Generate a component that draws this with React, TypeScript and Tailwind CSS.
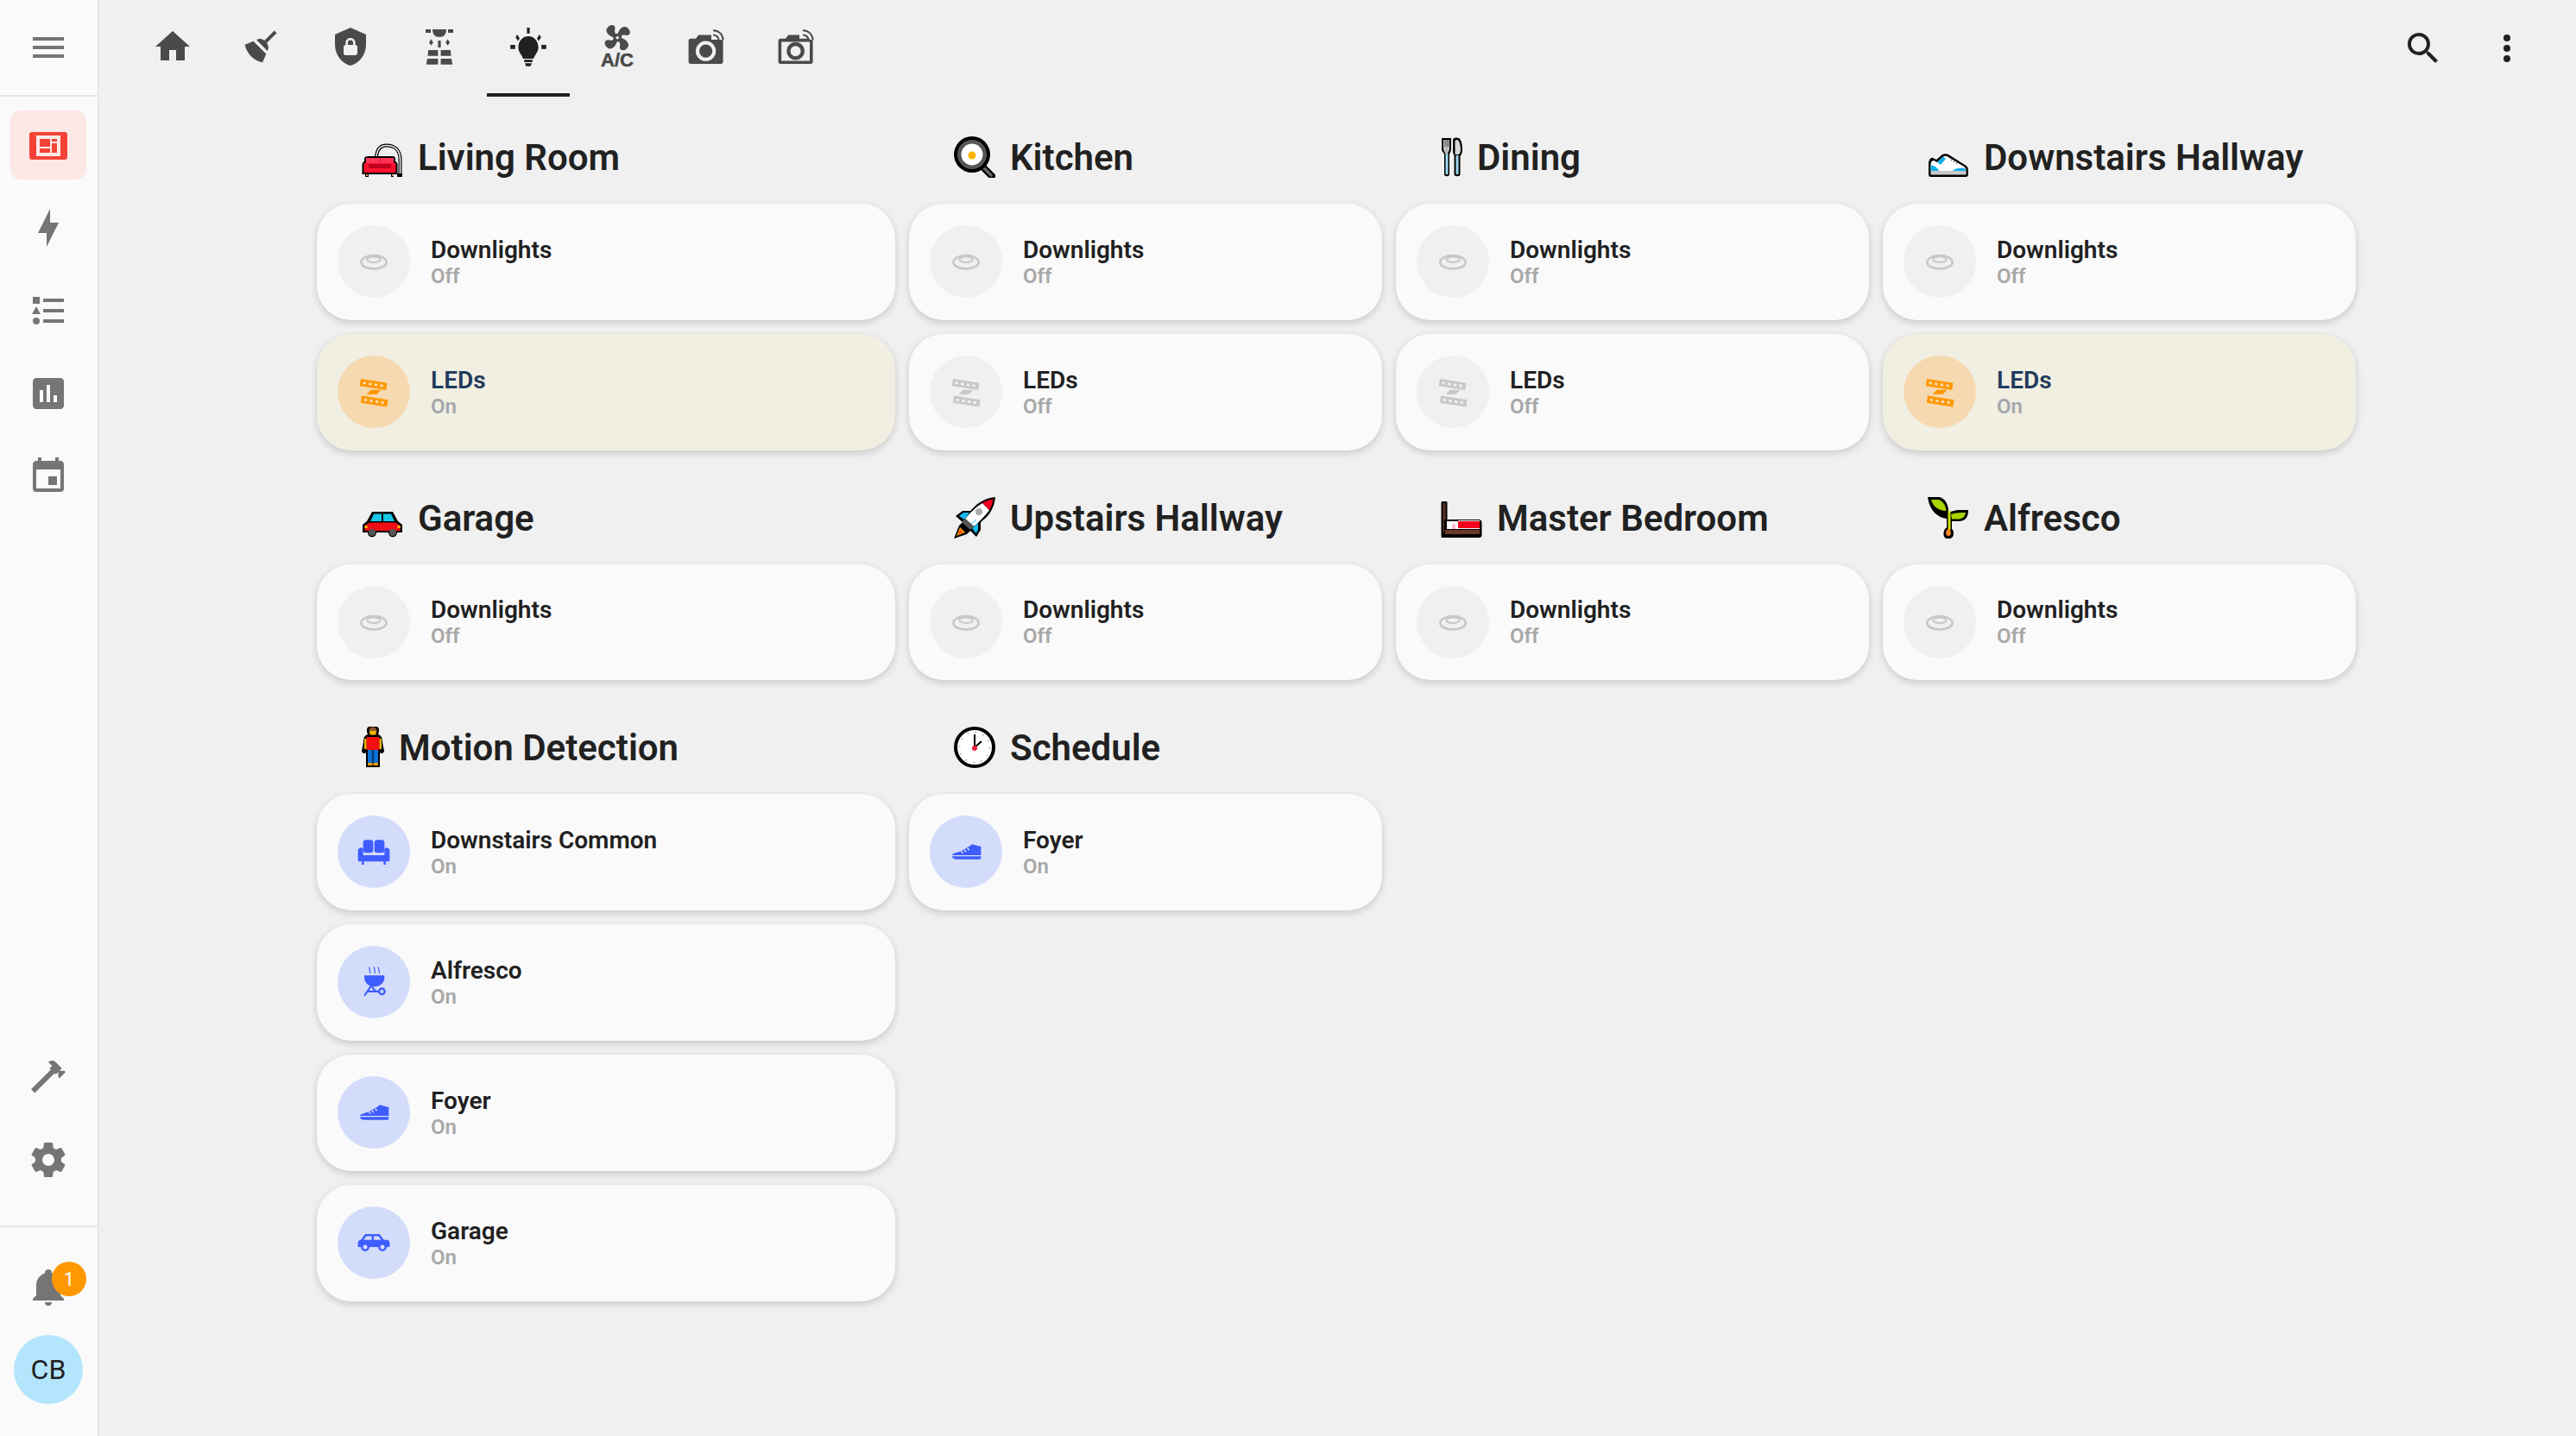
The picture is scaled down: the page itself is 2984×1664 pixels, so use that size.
import type { ReactNode } from "react";

const P = {
  menu: "M3,6H21V8H3V6M3,11H21V13H3V11M3,16H21V18H3V16Z",
  home: "M10,20V14H14V20H19V12H22L12,3L2,12H5V20H10Z",
  broom:
    "M19.36,2.72L20.78,4.14L15.06,9.85C16.13,11.39 16.28,13.24 15.38,14.44L9.06,8.12C10.26,7.22 12.11,7.37 13.65,8.44L19.36,2.72M5.93,17.57C3.92,15.56 2.69,13.16 2.35,10.92L7.23,8.83L14.67,16.27L12.58,21.15C10.34,20.81 7.94,19.58 5.93,17.57Z",
  shield:
    "M12,1L3,5V11C3,16.55 6.84,21.74 12,23C17.16,21.74 21,16.55 21,11V5L12,1M12,7C13.4,7 14.8,8.1 14.8,9.5V11C15.4,11 16,11.6 16,12.3V15.8C16,16.4 15.4,17 14.7,17H9.2C8.6,17 8,16.4 8,15.7V12.2C8,11.6 8.6,11 9.2,11V9.5C9.2,8.1 10.6,7 12,7M12,8.2C11.2,8.2 10.5,8.7 10.5,9.5V11H13.5V9.5C13.5,8.7 12.8,8.2 12,8.2Z",
  fan: "M12,11A1,1 0 0,0 11,12A1,1 0 0,0 12,13A1,1 0 0,0 13,12A1,1 0 0,0 12,11M12.5,2C17,2 17.11,5.57 14.75,6.75C13.76,7.24 13.32,8.29 13.13,9.22C13.61,9.42 14.03,9.73 14.35,10.13C18.05,8.13 22.03,8.92 22.03,12.5C22.03,17 18.46,17.1 17.28,14.73C16.78,13.74 15.72,13.3 14.79,13.11C14.59,13.59 14.28,14 13.88,14.34C15.87,18.03 15.08,22 11.5,22C7,22 6.91,18.42 9.27,17.24C10.25,16.75 10.69,15.71 10.89,14.79C10.4,14.59 9.97,14.27 9.65,13.87C5.96,15.85 2,15.07 2,11.5C2,7 5.56,6.89 6.74,9.26C7.24,10.25 8.29,10.68 9.22,10.87C9.41,10.39 9.73,9.97 10.14,9.65C8.15,5.96 8.94,2 12.5,2Z",
  bolt: "M11 15H6L13 1V9H18L11 23V15Z",
  list: "M5,9.5L7.5,14H2.5L5,9.5M3,4H7V8H3V4M5,20A2,2 0 0,0 7,18A2,2 0 0,0 5,16A2,2 0 0,0 3,18A2,2 0 0,0 5,20M9,5V7H21V5H9M9,19H21V17H9V19M9,13H21V11H9V13Z",
  chart:
    "M19 3H5C3.9 3 3 3.9 3 5V19C3 20.1 3.9 21 5 21H19C20.1 21 21 20.1 21 19V5C21 3.9 20.1 3 19 3M9 17H7V10H9V17M13 17H11V7H13V17M17 17H15V13H17V17Z",
  calendar:
    "M19,19H5V8H19M16,1V3H8V1H6V3H5C3.89,3 3,3.89 3,5V19A2,2 0 0,0 5,21H19A2,2 0 0,0 21,19V5C21,3.89 20.1,3 19,3H18V1M17,12H12V17H17V12Z",
  hammer:
    "M2 19.63L13.43 8.2L12.72 7.5L14.14 6.07L12 3.89C13.2 2.7 15.09 2.7 16.27 3.89L19.87 7.5L18.45 8.91H21.29L22 9.62L18.45 13.21L17.74 12.5V9.62L16.27 11.04L15.56 10.33L4.13 21.76L2 19.63Z",
  cog: "M12,15.5A3.5,3.5 0 0,1 8.5,12A3.5,3.5 0 0,1 12,8.5A3.5,3.5 0 0,1 15.5,12A3.5,3.5 0 0,1 12,15.5M19.43,12.97C19.47,12.65 19.5,12.33 19.5,12C19.5,11.67 19.47,11.34 19.43,11L21.54,9.37C21.73,9.22 21.78,8.95 21.66,8.73L19.66,5.27C19.54,5.05 19.27,4.96 19.05,5.05L16.56,6.05C16.04,5.66 15.5,5.32 14.87,5.07L14.5,2.42C14.46,2.18 14.25,2 14,2H10C9.75,2 9.54,2.18 9.5,2.42L9.13,5.07C8.5,5.32 7.96,5.66 7.44,6.05L4.95,5.05C4.73,4.96 4.46,5.05 4.34,5.27L2.34,8.73C2.21,8.95 2.27,9.22 2.46,9.37L4.57,11C4.53,11.34 4.5,11.67 4.5,12C4.5,12.33 4.53,12.65 4.57,12.97L2.46,14.63C2.27,14.78 2.21,15.05 2.34,15.27L4.34,18.73C4.46,18.95 4.73,19.03 4.95,18.95L7.44,17.94C7.96,18.34 8.5,18.68 9.13,18.93L9.5,21.58C9.54,21.82 9.75,22 10,22H14C14.25,22 14.46,21.82 14.5,21.58L14.87,18.93C15.5,18.67 16.04,18.34 16.56,17.94L19.05,18.95C19.27,19.03 19.54,18.95 19.66,18.73L21.66,15.27C21.78,15.05 21.73,14.78 21.54,14.63L19.43,12.97Z",
  bell: "M21,19V20H3V19L5,17V11C5,7.9 7.03,5.17 10,4.29C10,4.19 10,4.1 10,4A2,2 0 0,1 12,2A2,2 0 0,1 14,4C14,4.1 14,4.19 14,4.29C16.97,5.17 19,7.9 19,11V17L21,19M14,21A2,2 0 0,1 12,23A2,2 0 0,1 10,21",
  magnify:
    "M9.5,3A6.5,6.5 0 0,1 16,9.5C16,11.11 15.41,12.59 14.44,13.73L14.71,14H15.5L20.5,19L19,20.5L14,15.5V14.71L13.73,14.44C12.59,15.41 11.11,16 9.5,16A6.5,6.5 0 0,1 3,9.5A6.5,6.5 0 0,1 9.5,3M9.5,5C7,5 5,7 5,9.5C5,12 7,14 9.5,14C12,14 14,12 14,9.5C14,7 12,5 9.5,5Z",
  dots: "M12,16A2,2 0 0,1 14,18A2,2 0 0,1 12,20A2,2 0 0,1 10,18A2,2 0 0,1 12,16M12,10A2,2 0 0,1 14,12A2,2 0 0,1 12,14A2,2 0 0,1 10,12A2,2 0 0,1 12,10M12,4A2,2 0 0,1 14,6A2,2 0 0,1 12,8A2,2 0 0,1 10,6A2,2 0 0,1 12,4Z",
  carSide:
    "M16,6L19,10H21C22.11,10 23,10.89 23,12V15H21A3,3 0 0,1 18,18A3,3 0 0,1 15,15H9A3,3 0 0,1 6,18A3,3 0 0,1 3,15H1V12C1,10.89 1.89,10 3,10L6,6H16M10.5,7.5H6.75L4.86,10H10.5V7.5M12,7.5V10H17.14L15.25,7.5H12M6,13.5A1.5,1.5 0 0,0 4.5,15A1.5,1.5 0 0,0 6,16.5A1.5,1.5 0 0,0 7.5,15A1.5,1.5 0 0,0 6,13.5M18,13.5A1.5,1.5 0 0,0 16.5,15A1.5,1.5 0 0,0 18,16.5A1.5,1.5 0 0,0 19.5,15A1.5,1.5 0 0,0 18,13.5Z",
};

function Svg({ size = 48, children, className }: { size?: number; children: ReactNode; className?: string }) {
  return (
    <svg viewBox="0 0 24 24" width={size} height={size} fill="currentColor" className={className}>
      {children}
    </svg>
  );
}

function Mdi({ d, size = 48 }: { d: string; size?: number }) {
  return (
    <Svg size={size}>
      <path d={d} />
    </Svg>
  );
}

function FloodIcon() {
  return (
    <Svg>
      <path d="M8 2H16C16 5 14.5 6.5 12 6.5C9.5 6.5 8 5 8 2Z" />
      <rect x="4" y="2" width="3" height="2" />
      <rect x="17" y="2" width="3" height="2" />
      <path d="M7.2 7.6L8.4 9.6L7.2 11.4L6 9.6ZM16.8 7.6L18 9.6L16.8 11.4L15.6 9.6Z" />
      <rect x="11.2" y="8.5" width="1.6" height="4" />
      <path d="M5.6 14H11.2V17.4H5.2ZM12.8 14H18.4L18.8 17.4H12.8ZM5 19H11.2V22.4H4.4ZM12.8 19H19L19.6 22.4H12.8Z" />
    </Svg>
  );
}

function BulbIcon() {
  return (
    <Svg>
      <path d="M12 6C15.5 6 17.8 9 17.8 12.5C17.8 15 16 16.5 15 19H9C8 16.5 6.2 15 6.2 12.5C6.2 9 8.5 6 12 6Z" />
      <rect x="9.6" y="19.6" width="4.8" height="1.4" />
      <path d="M10 21.6H14L13.3 23.4H10.7Z" />
      <rect x="11.2" y="1" width="1.6" height="3.4" />
      <rect x="1.6" y="11" width="2.8" height="2.4" />
      <rect x="19.6" y="11" width="2.8" height="2.4" />
      <path d="M5.6 5L7 7.2L6 8.8L4.6 6.6ZM18.4 5L19.4 6.6L18 8.8L17 7.2Z" />
    </Svg>
  );
}

function AcIcon() {
  return (
    <svg viewBox="0 0 48 54" width={48} height={54} fill="currentColor">
      <g transform="translate(4.5 -3) scale(1.64) rotate(45 12 12)">
        <path d={P.fan} />
      </g>
      <text
        x="5"
        y="50"
        fontSize="22"
        fontWeight="700"
        fontFamily="'Liberation Sans', sans-serif"
        stroke="currentColor"
        strokeWidth="0.5"
        textLength="38"
        lengthAdjust="spacingAndGlyphs"
      >
        A/C
      </text>
    </svg>
  );
}

function CameraIcon({ outline }: { outline?: boolean }) {
  return (
    <Svg>
      <g transform={outline ? "translate(0.5 0)" : undefined}>
        {outline ? (
          <>
            <path
              fillRule="evenodd"
              d="M1.8 8.6C1.8 7.9 2.3 7.4 3 7.4H6L7.6 5.2H14V7.4H20V8H21.8V20.8C21.8 21.5 21.3 22 20.6 22H3C2.3 22 1.8 21.5 1.8 20.8ZM3.6 9.2V20.2H20V9.2H3.6Z"
            />
            <path fillRule="evenodd" d="M11.8 9.4A5.2 5.2 0 1 1 11.8 19.8A5.2 5.2 0 1 1 11.8 9.4ZM11.8 11.6A3 3 0 1 0 11.8 17.6A3 3 0 1 0 11.8 11.6Z" />
          </>
        ) : (
          <path
            fillRule="evenodd"
            d="M1.8 8.6C1.8 7.9 2.3 7.4 3 7.4H6L7.6 5.2H15V8H21.8V20.8C21.8 21.5 21.3 22 20.6 22H3C2.3 22 1.8 21.5 1.8 20.8ZM11.8 8.8A5.8 5.8 0 1 0 11.8 20.4A5.8 5.8 0 1 0 11.8 8.8ZM11.8 10.8A3.8 3.8 0 1 1 11.8 18.4A3.8 3.8 0 1 1 11.8 10.8Z"
          />
        )}
        <path d="M16 2.6C19.4 2.6 21.6 5 21.8 8M16 5.2C17.8 5.2 19 6.4 19.3 8" fill="none" stroke="currentColor" strokeWidth="1" />
      </g>
    </Svg>
  );
}

function RecessedIcon() {
  return (
    <Svg size={40}>
      <g fill="none" stroke="currentColor">
        <ellipse cx="12" cy="12.5" rx="8.8" ry="4.6" strokeWidth="1.6" />
        <ellipse cx="12" cy="10.6" rx="4.6" ry="2" strokeWidth="1.3" />
      </g>
    </Svg>
  );
}

function StripIcon() {
  const strip =
    "M0 0H18.5V5H0ZM2 1.6V3.4H4V1.6ZM6 1.6V3.4H8V1.6ZM10 1.6V3.4H12V1.6ZM14 1.6V3.4H16V1.6Z";
  return (
    <Svg size={40}>
      <path transform="rotate(9 3 3) translate(3 3)" fillRule="evenodd" d={strip} />
      <path transform="rotate(9 3 15) translate(3.6 14.6)" fillRule="evenodd" d={strip} />
      <path d="M10 10.6H17.2L14 13.8H7Z" />
    </Svg>
  );
}

function SofaIcon() {
  return (
    <Svg size={40}>
      <rect x="4.6" y="3.8" width="7" height="9" rx="2" />
      <rect x="12.4" y="3.8" width="7" height="9" rx="2" />
      <path d="M1 11A2 2 0 0 1 4.6 10V14.4H19.4V10A2 2 0 0 1 23 11V17.8A1 1 0 0 1 22 18.8H2A1 1 0 0 1 1 17.8Z" />
      <rect x="3.6" y="18.8" width="1.6" height="2.2" />
      <rect x="18.8" y="18.8" width="1.6" height="2.2" />
    </Svg>
  );
}

function GrillIcon() {
  return (
    <Svg size={40}>
      <path d="M5.4 7.4H19.4V9C19.4 12.4 16.4 15.2 12.4 15.2C8.4 15.2 5.4 12.4 5.4 9Z" />
      <g fill="none" stroke="currentColor" strokeWidth="0.7">
        <path d="M8.6 1.6C9.6 3.2 8.8 4 9.6 5.8M12 1.6C13 3.2 12.2 4 13 5.8M15 1.6C16 3.2 15.2 4 16 5.8" />
      </g>
      <g fill="none" stroke="currentColor" strokeWidth="1.3" strokeLinecap="round">
        <path d="M9.8 15L5.8 21M10.6 15L13 18.2M7.6 18.5H15" />
      </g>
      <circle cx="17.6" cy="18.5" r="2" fill="none" stroke="currentColor" strokeWidth="1.4" />
    </Svg>
  );
}

function SneakerIcon() {
  return (
    <Svg size={40}>
      <path d="M2.4 14.4C2.4 13 6 12.6 9 11.4L14.8 8L16 6.8L22.4 8.4V14.4Z" />
      <path d="M2.4 15.2H22.4V16.4C22.4 16.9 22 17.2 21.6 17.2H5C3.2 17.2 2.4 16.2 2.4 15.2Z" />
      <path d="M8.6 11.8L9.8 13M10.8 10.8L12 12M13 9.6L14.2 10.8" stroke="#fafafa" strokeWidth="0.7" fill="none" />
    </Svg>
  );
}

function Emoji({ width = 48, children }: { width?: number; children: ReactNode }) {
  return (
    <svg viewBox={`0 0 ${width} 48`} width={width} height={48} className="shrink-0">
      {children}
    </svg>
  );
}

const EMOJI: Record<string, ReactNode> = {
  sofa: (
    <Emoji>
      <path d="M17 26C17 15 22 10.5 29 10.5C38 10.5 44.5 16 44.5 27V46" fill="none" stroke="#000" strokeWidth="4" />
      <path d="M17 26C17 15 22 10.5 29 10.5C38 10.5 44.5 16 44.5 27V44" fill="none" stroke="#e8e8e8" strokeWidth="1.6" />
      <path d="M7 23H36C38 23 39 24 39 26V29C41 30 41.5 31 41.5 33V44H37V47H34V44H8V47H4V44H0.5V33C0.5 31 1 30 3 29V26C3 24 5 23 7 23Z" fill="#000" />
      <rect x="5" y="25" width="32" height="10" fill="#ff3358" />
      <rect x="20.5" y="25" width="1" height="8" fill="#d8143a" />
      <rect x="2.5" y="31" width="37" height="11" fill="#ff0f2e" />
      <rect x="8" y="32" width="26" height="5" fill="#bd0020" />
      <rect x="41" y="43" width="6" height="4" fill="#000" />
      <rect x="5" y="44" width="2" height="2" fill="#d9a066" />
      <rect x="35" y="44" width="2" height="2" fill="#d9a066" />
    </Emoji>
  ),
  pan: (
    <Emoji>
      <path d="M31 33L44 46" stroke="#000" strokeWidth="8" strokeLinecap="round" />
      <path d="M32 34L43 45" stroke="#666" strokeWidth="3.5" strokeLinecap="round" />
      <circle cx="21" cy="21" r="21" fill="#000" />
      <circle cx="21" cy="21" r="17" fill="#555" />
      <circle cx="21" cy="21" r="12.5" fill="#fff" />
      <circle cx="21" cy="22" r="4.5" fill="#ffb300" />
    </Emoji>
  ),
  cutlery: (
    <Emoji width={25}>
      <path d="M1 2H12V15C12 18 10 19 10 21V44C10 47 4 47 4 44V21C4 19 1 18 1 15Z" fill="#000" />
      <path d="M3 4H10V15C10 17 8 18 8 20H5C5 18 3 17 3 15Z" fill="#bdbdbd" />
      <path d="M5 4V12M7 4V12M8.7 4V12" stroke="#444" strokeWidth="0.8" />
      <rect x="5.5" y="20" width="3" height="24" fill="#9fd8ef" />
      <path d="M14 4C14 1 19 1 21 2C24 4 25 10 25 16C25 20 23 22 22.5 23V44C22.5 47 15.5 47 15.5 44V22C14.5 21 14 19 14 17Z" fill="#000" />
      <path d="M16.5 5C18 3.5 19.5 3.5 20.5 5C22.5 8 23 13 23 16C23 19 21 21 20.5 21H16.5Z" fill="#d5d5d5" />
      <rect x="17.5" y="22" width="3" height="22" fill="#9fd8ef" />
    </Emoji>
  ),
  shoe: (
    <Emoji>
      <path d="M1 32C1 27 4 24 6 25L10 27L17 21C19 20 22 20 24 21L43 33C47 35 47 38 47 41V44C47 46 46 47 44 47H4C2 47 1 46 1 44Z" fill="#000" />
      <path d="M3.5 33C3.5 30 5 27.5 7 28L11 30L18 23.5C19.5 22.5 21.5 22.5 23 23.5L42 35C44 36 44.5 38 44.5 40H3.5Z" fill="#fff" />
      <path d="M3.5 40V34C7 33 11 36 13 40ZM11 30L18 23.5L21 26L15 33ZM29 40C31 37 38 36 43 37L44.5 40Z" fill="#11aeea" />
      <rect x="3.5" y="40" width="41" height="4.5" fill="#c9c9c9" />
      <path d="M27 28L29 26M30 30L32 28M33 32L35 30" stroke="#333" strokeWidth="1" />
    </Emoji>
  ),
  car: (
    <Emoji>
      <path d="M12 17H36L42 28L47 32V41H41C41 48 31 48 31 41H17C17 48 7 48 7 41H1V32L6 28Z" fill="#000" />
      <path d="M14 19.5H34L38 28H10Z" fill="#19c7e6" />
      <rect x="23" y="19.5" width="2" height="9" fill="#000" />
      <path d="M9 29.5H39L44.5 33V39H3.5V33Z" fill="#ee0f14" />
      <rect x="3.5" y="33" width="3" height="3" fill="#ffc107" />
      <rect x="41.5" y="33" width="3" height="3" fill="#ffc107" />
      <circle cx="12" cy="41" r="4" fill="#555" />
      <circle cx="36" cy="41" r="4" fill="#555" />
    </Emoji>
  ),
  rocket: (
    <Emoji>
      <path d="M48 0C38 1 30 5 24 11L19 16L10 16L2 22L10 29L6 33L0 48L15 43L19 39L26 46L31 38L31 29L37 24C43 18 47 10 48 0Z" fill="#000" />
      <path d="M33 7L41 15C37 21 28 30 23 34L13 25C19 18 26 11 33 7Z" fill="#fff" />
      <path d="M45.5 2.5C40 3 36 5 33 7L41 15C43 11.5 45 7 45.5 2.5Z" fill="#f0001c" />
      <circle cx="29" cy="17" r="4" fill="#aaa" />
      <path d="M26 26L19 32" stroke="#13b9ee" strokeWidth="1" />
      <path d="M18 18L11 18L6 22L12 26ZM28 30L28 38L25.5 42L21 36Z" fill="#13b9ee" />
      <path d="M13 25L23 34L19 38L9 29Z" fill="#555" />
      <path d="M7 35L13 41L3 45Z" fill="#ff9800" />
      <path d="M7.5 38L10 41L5 43Z" fill="#ff3d00" />
    </Emoji>
  ),
  bed: (
    <Emoji>
      <rect x="0.5" y="5" width="7" height="42" rx="1.5" fill="#000" />
      <rect x="2.5" y="7" width="3" height="34" fill="#5d3227" />
      <path d="M4 26H44C46.5 26 47.5 28 47.5 30V44C47.5 46 46 47 45 47H4Z" fill="#000" />
      <rect x="7" y="28" width="13" height="9" fill="#fff" />
      <rect x="13" y="31" width="4" height="6" fill="#ffb6c8" />
      <rect x="20" y="27" width="25" height="10" fill="#f5f5f5" />
      <rect x="20" y="28" width="25" height="8" fill="#f6001c" />
      <rect x="5" y="38" width="40" height="5" fill="#6b3a2a" />
    </Emoji>
  ),
  sprout: (
    <Emoji>
      <path d="M24 36C19 38 18 47 24 47C30 47 30 38 24 36Z" fill="#000" stroke="#000" strokeWidth="3" />
      <path d="M24 37C20 39 20 45 24 45C28 45 28 39 24 37Z" fill="#f47a38" />
      <path d="M0 0H14C20 2 24 8 24 16V18C33 14 38 15 47 15C47 23 44 28 36 28H28V37H22V25C12 24 2 16 0 0Z" fill="#000" />
      <path d="M4 3H13C18 5 21 10 21.5 16C13 16 6 11 4 3Z" fill="#a8d400" />
      <path d="M27 20C33 18 38 18 44 18C43 23 40 25.5 35 25.5H28Z" fill="#a8d400" />
      <rect x="23.5" y="16" width="3" height="22" fill="#c5e000" />
      <path d="M24.5 36V44" stroke="#ff9b00" strokeWidth="1.5" />
    </Emoji>
  ),
  person: (
    <Emoji width={26}>
      <path d="M9 0H17C20 0 21 4 19 9C22 10 24 12 24 18L26 28C26 31 22 32 21 30V47H5V30C4 32 0 31 0 28L2 18C2 12 4 10 7 9C5 4 6 0 9 0Z" fill="#000" />
      <circle cx="13" cy="5" r="4.5" fill="#8d5a2b" />
      <rect x="9.5" y="5" width="7" height="4.5" fill="#f5b400" />
      <rect x="5.5" y="12" width="15" height="15" fill="#f20f0f" />
      <rect x="3" y="14" width="2.5" height="12" fill="#f5b400" />
      <rect x="20.5" y="14" width="2.5" height="12" fill="#f5b400" />
      <rect x="7" y="27" width="5.5" height="15" fill="#0d6fd6" />
      <rect x="13.5" y="27" width="5.5" height="15" fill="#0d6fd6" />
      <rect x="7" y="42" width="5.5" height="3" fill="#f59e00" />
      <rect x="13.5" y="42" width="5.5" height="3" fill="#f59e00" />
    </Emoji>
  ),
  clock: (
    <Emoji>
      <circle cx="24" cy="24" r="22" fill="#fff" stroke="#000" strokeWidth="4" />
      <circle cx="24" cy="24" r="17.5" fill="none" stroke="#bbb" strokeWidth="2.2" strokeDasharray="1.6 7.56" />
      <path d="M24 24V9M24 24L32 17" stroke="#000" strokeWidth="2" />
      <circle cx="24" cy="25" r="3" fill="#f01f3c" />
    </Emoji>
  ),
};

type Kind = "off" | "on" | "blue";
type Tile = { name: string; state: string; kind: Kind; icon: ReactNode };
type Section = { emoji: string; title: string; tiles: Tile[] };

const downlights: Tile = { name: "Downlights", state: "Off", kind: "off", icon: <RecessedIcon /> };
const ledsOff: Tile = { name: "LEDs", state: "Off", kind: "off", icon: <StripIcon /> };
const ledsOn: Tile = { name: "LEDs", state: "On", kind: "on", icon: <StripIcon /> };
const foyer: Tile = { name: "Foyer", state: "On", kind: "blue", icon: <SneakerIcon /> };

const rows: Section[][] = [
  [
    { emoji: "sofa", title: "Living Room", tiles: [downlights, ledsOn] },
    { emoji: "pan", title: "Kitchen", tiles: [downlights, ledsOff] },
    { emoji: "cutlery", title: "Dining", tiles: [downlights, ledsOff] },
    { emoji: "shoe", title: "Downstairs Hallway", tiles: [downlights, ledsOn] },
  ],
  [
    { emoji: "car", title: "Garage", tiles: [downlights] },
    { emoji: "rocket", title: "Upstairs Hallway", tiles: [downlights] },
    { emoji: "bed", title: "Master Bedroom", tiles: [downlights] },
    { emoji: "sprout", title: "Alfresco", tiles: [downlights] },
  ],
  [
    {
      emoji: "person",
      title: "Motion Detection",
      tiles: [
        { name: "Downstairs Common", state: "On", kind: "blue", icon: <SofaIcon /> },
        { name: "Alfresco", state: "On", kind: "blue", icon: <GrillIcon /> },
        foyer,
        { name: "Garage", state: "On", kind: "blue", icon: <Mdi d={P.carSide} size={40} /> },
      ],
    },
    { emoji: "clock", title: "Schedule", tiles: [foyer] },
  ],
];

function TileCard({ tile }: { tile: Tile }) {
  const on = tile.kind === "on";
  const blue = tile.kind === "blue";
  return (
    <div
      className={`flex h-[134.5px] items-center gap-6 rounded-[40px] pl-6 shadow-[0_3px_9px_rgba(0,0,0,0.17)] ${
        on ? "bg-[#f1eee2]" : "bg-[#fafafa]"
      }`}
    >
      <div
        className={`flex h-[84px] w-[84px] shrink-0 items-center justify-center rounded-full ${
          on ? "bg-[#f6d9b0] text-[#ff9800]" : blue ? "bg-[#d3dcfb] text-[#3f5dff]" : "bg-[#f0f0f0] text-[#c8c8c8]"
        }`}
      >
        {tile.icon}
      </div>
      <div className="flex flex-col">
        <span className={`text-[28px] leading-[33px] font-semibold ${on ? "text-[#1f3b5c]" : "text-[#212121]"}`}>
          {tile.name}
        </span>
        <span className={`text-[24px] leading-[28px] font-semibold ${on ? "text-[#a4a8ac]" : "text-[#a8a8a8]"}`}>
          {tile.state}
        </span>
      </div>
    </div>
  );
}

function SideItem({ d, active }: { d?: string; active?: boolean }) {
  return (
    <div
      className={`mx-3 flex h-20 w-[88px] items-center justify-center rounded-xl ${
        active ? "bg-[#fce8e5] text-[#f44336]" : "text-[#757575]"
      }`}
    >
      {active ? (
        <svg viewBox="0 0 48 48" width={48} height={48} fill="currentColor">
          <path
            fillRule="evenodd"
            d="M5 9H43A3 3 0 0 1 46 12V38A3 3 0 0 1 43 41H5A3 3 0 0 1 2 38V12A3 3 0 0 1 5 9ZM10 13V37H38V13ZM14 17H26V26H14ZM14 28H26V33H14ZM28 17H34V20H28ZM28 22H34V33H28Z"
          />
        </svg>
      ) : (
        <Mdi d={d as string} />
      )}
    </div>
  );
}

const tabs: ReactNode[] = [
  <Mdi key="home" d={P.home} />,
  <Mdi key="broom" d={P.broom} />,
  <Mdi key="shield" d={P.shield} />,
  <FloodIcon key="flood" />,
  <BulbIcon key="bulb" />,
  <AcIcon key="ac" />,
  <CameraIcon key="cam" />,
  <CameraIcon key="cam2" outline />,
];

export default function App() {
  return (
    <div className="flex h-screen w-full overflow-hidden bg-[#f0f0f0] font-[Roboto,sans-serif] text-[#212121]">
      <aside className="flex w-[115px] shrink-0 flex-col border-r-2 border-[#e6e6e6] bg-[#fafafa]">
        <div className="flex h-[112px] shrink-0 items-center justify-center border-b-2 border-[#e6e6e6] pr-px text-[#757575]">
          <Mdi d={P.menu} />
        </div>
        <nav className="mt-4 flex flex-col gap-4">
          <SideItem active />
          <SideItem d={P.bolt} />
          <SideItem d={P.list} />
          <SideItem d={P.chart} />
          <SideItem d={P.calendar} />
        </nav>
        <div className="mt-auto flex flex-col gap-[17px]">
          <SideItem d={P.hammer} />
          <SideItem d={P.cog} />
        </div>
        <div className="mt-9 h-0.5 bg-[#e6e6e6]" />
        <div className="relative mx-3 mt-[29px] flex h-20 w-[88px] items-center justify-center text-[#757575]">
          <Mdi d={P.bell} />
          <span className="absolute left-12 top-[11px] flex h-10 w-10 items-center justify-center rounded-full bg-[#ff9800] text-[22px] text-white">
            1
          </span>
        </div>
        <div className="mx-4 mb-[37px] mt-4 flex h-20 w-20 items-center justify-center rounded-full bg-[#b3e5fc] text-[32px]">
          CB
        </div>
      </aside>

      <main className="min-w-0 flex-1">
        <header className="flex h-[112px] items-start pl-[37px] pr-14 text-[#4a4a4a]">
          <div className="flex gap-[7px]">
            {tabs.map((t, i) => (
              <div
                key={i}
                className={`flex h-[112px] w-24 items-center justify-center border-b-4 ${
                  i === 4 ? "border-[#212121] text-[#212121]" : "border-transparent"
                }`}
              >
                {t}
              </div>
            ))}
          </div>
          <div className="ml-auto flex h-[112px] items-center gap-[49px] text-[#212121]">
            <Mdi d={P.magnify} />
            <Mdi d={P.dots} />
          </div>
        </header>

        <div className="flex flex-col gap-4 pl-[252px] pt-2">
          {rows.map((row, r) => (
            <div key={r} className="grid grid-cols-[670px_548px_548px_548px] gap-x-4">
              {row.map((section) => (
                <section key={section.title}>
                  <h2 className="flex h-[116px] items-end gap-[17px] pb-[30px] pl-[52px] text-[42px] font-semibold">
                    {EMOJI[section.emoji]}
                    <span className="leading-[46px]">{section.title}</span>
                  </h2>
                  <div className="flex flex-col gap-[16.5px]">
                    {section.tiles.map((t, i) => (
                      <TileCard key={i} tile={t} />
                    ))}
                  </div>
                </section>
              ))}
            </div>
          ))}
        </div>
      </main>
    </div>
  );
}
